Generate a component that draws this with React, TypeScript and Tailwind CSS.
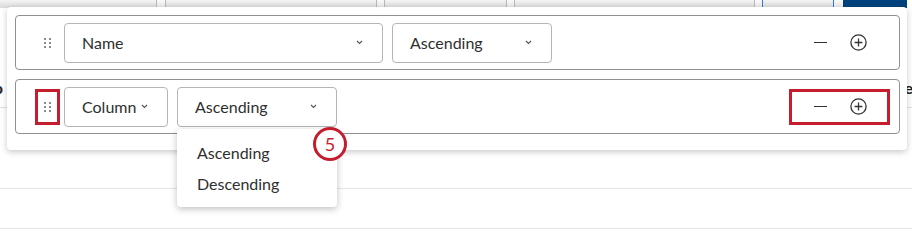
import React from "react"

const font = { fontFamily: 'Lato, "Open Sans", Arial, sans-serif' }

function Chevron() {
  return (
    <svg width="7" height="5" viewBox="0 0 7 5" className="shrink-0">
      <path d="M1 1l2.5 2.5L6 1" fill="none" stroke="#555" strokeWidth="1.1" />
    </svg>
  )
}

function Select({ label, width }: { label: string; width: string }) {
  return (
    <div className={`${width} h-[40px] flex items-center justify-between pl-[17px] pr-[19px] border border-[#b5b5b5] rounded-[4px] bg-white`}>
      <span className="text-[16px] text-[#2f2f2f]">{label}</span>
      <Chevron />
    </div>
  )
}

function DragHandle() {
  return (
    <div className="grid grid-cols-2 gap-x-[3px] gap-y-[2px]">
      {[0, 1, 2, 3, 4, 5].map((i) => (
        <span key={i} className="w-[2px] h-[2px] bg-[#8c8c8c]" />
      ))}
    </div>
  )
}

function Actions({ highlight }: { highlight?: boolean }) {
  return (
    <div
      className={`ml-auto mr-[9px] h-[36px] flex items-center gap-[22px] px-[20px] border-[3px] ${
        highlight ? "border-[#c41e2e]" : "border-transparent"
      }`}
    >
      <div className="w-[16px] h-[16px] flex items-center justify-center">
        <span className="block w-[13px] h-[1.5px] bg-[#333]" />
      </div>
      <svg width="17" height="17" viewBox="0 0 17 17">
        <circle cx="8.5" cy="8.5" r="7.6" fill="none" stroke="#333" strokeWidth="1.3" />
        <path d="M8.5 4.6v7.8M4.6 8.5h7.8" stroke="#333" strokeWidth="1.3" />
      </svg>
    </div>
  )
}

function SortRow({ first, second, firstWidth, highlight }: { first: string; second: string; firstWidth: string; highlight?: boolean }) {
  return (
    <div className="h-[55px] flex items-center border border-[#8f8f8f] rounded-[4px]">
      <div
        className={`ml-[19px] mr-[4px] w-[25px] h-[36px] flex items-center justify-center border-[3px] ${
          highlight ? "border-[#c41e2e]" : "border-transparent"
        }`}
      >
        <DragHandle />
      </div>
      <div className="flex items-center gap-[9px]">
        <Select label={first} width={firstWidth} />
        <Select label={second} width="w-[160px]" />
      </div>
      <Actions highlight={highlight} />
    </div>
  )
}

export default function App() {
  return (
    <div className="relative w-[912px] h-[246px] overflow-hidden bg-white" style={font}>
      {/* background table */}
      <div className="flex h-[8px]">
        <div className="w-[157px] bg-gradient-to-b from-[#f4f4f4] to-[#d9d9d9] border-r border-[#b8b8b8]" />
        <div className="w-[9px] bg-gradient-to-b from-[#fafafa] to-[#e6e6e6] border-r border-[#b8b8b8]" />
        <div className="w-[211px] bg-gradient-to-b from-[#f4f4f4] to-[#d9d9d9] border-r border-[#b8b8b8]" />
        <div className="w-[8px] bg-gradient-to-b from-[#fafafa] to-[#e6e6e6] border-r border-[#b8b8b8]" />
        <div className="w-[122px] bg-gradient-to-b from-[#f4f4f4] to-[#d9d9d9] border-r border-[#b8b8b8]" />
        <div className="w-[8px] bg-gradient-to-b from-[#fafafa] to-[#e6e6e6] border-r border-[#b8b8b8]" />
        <div className="w-[240px] bg-gradient-to-b from-[#f4f4f4] to-[#d9d9d9] border-r border-[#b8b8b8]" />
        <div className="w-[8px] bg-gradient-to-b from-[#fafafa] to-[#e6e6e6] border-r border-[#2a7bd0]" />
        <div className="w-[71px] bg-gradient-to-b from-[#f4f4f4] to-[#d9d9d9] border-r border-[#2a7bd0]" />
        <div className="w-[9px] bg-gradient-to-b from-[#fafafa] to-[#e6e6e6]" />
        <div className="w-[64px] bg-[#00427d]" />
        <div className="flex-1 bg-white" />
      </div>
      <div className="h-[100px] flex items-center justify-between border-b border-[#e2e2e2] text-[16px] font-bold text-[#222] pt-[60px]">
        <span className="ml-[-14px]">To</span>
        <span className="mr-[-14px]">Pers</span>
      </div>
      <div className="h-[81px] border-b border-[#e6e6e6]" />
      <div className="h-[40px] border-b border-[#e6e6e6]" />

      {/* sort popover */}
      <div className="absolute left-[7px] top-[7px] w-[900px] h-[143px] bg-white rounded-[4px] shadow-[0_2px_6px_rgba(0,0,0,0.22)] pl-[8px] pr-[7px] pt-[8px] flex flex-col gap-[9px]">
        <SortRow first="Name" second="Ascending" firstWidth="w-[319px]" />
        <SortRow first="Column" second="Ascending" firstWidth="w-[104px]" highlight />
      </div>

      {/* open dropdown */}
      <div className="absolute left-[177px] top-[129px] w-[160px] py-[8px] bg-white rounded-[4px] shadow-[0_2px_7px_rgba(0,0,0,0.25)]">
        <div className="h-[31px] flex items-center pl-[20px] text-[16px] text-[#2f2f2f]">Ascending</div>
        <div className="h-[31px] flex items-center pl-[20px] text-[16px] text-[#2f2f2f]">Descending</div>
      </div>

      {/* step badge */}
      <div className="absolute left-[313px] top-[127px] w-[34px] h-[34px] rounded-full bg-white border-[3px] border-[#c41e2e] flex items-center justify-center text-[18px] text-[#c41e2e]">
        5
      </div>
    </div>
  )
}
